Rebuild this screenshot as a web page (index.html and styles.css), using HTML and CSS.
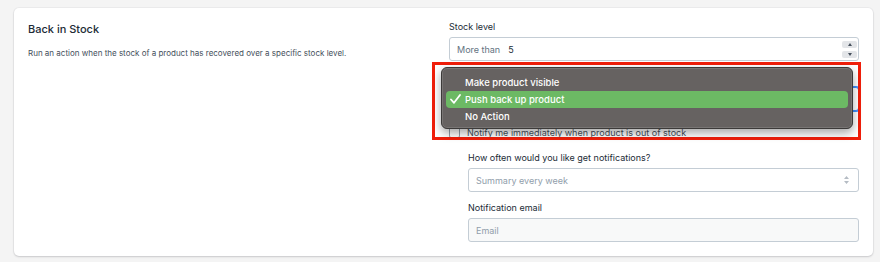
FILE: index.html
```html
<!DOCTYPE html>
<html lang="en">
  <head>
    <meta charset="UTF-8" />
    <title>Back in Stock</title>
    <link rel="stylesheet" href="styles.css">
  </head>
  <body>
    <div class="card">
      <div class="intro">
        <h2 class="title">Back in Stock</h2>
        <p class="desc">Run an action when the stock of a product has recovered over a specific stock level.</p>
      </div>

      <div class="settings">
        <div class="field">
          <label class="label">Stock level</label>
          <div class="input stock">
            <span class="prefix">More than</span>
            <span class="value">5</span>
            <div class="spinner">
              <span class="spin-btn"><svg width="4" height="3" viewBox="0 0 4 3"><path d="M0 3L2 0L4 3Z" fill="#454f5b"/></svg></span>
              <span class="spin-btn"><svg width="4" height="3" viewBox="0 0 4 3"><path d="M0 0L2 3L4 0Z" fill="#454f5b"/></svg></span>
            </div>
          </div>
        </div>

        <!-- the action select sits under the open popup menu -->
        <div class="field">
          <span class="label-space"></span>
          <div class="input select focused"></div>
        </div>

        <label class="check-row"><span class="checkbox"></span>Notify me immediately when product is out of stock</label>

        <div class="sub">
          <div class="field">
            <label class="label">How often would you like get notifications?</label>
            <div class="input select">
              <span class="placeholder">Summary every week</span>
              <svg class="arrows" width="5" height="8" viewBox="0 0 5 8"><path d="M0 3L2.5 0L5 3Z M0 5L2.5 8L5 5Z" fill="#b5bcc4"/></svg>
            </div>
          </div>
          <div class="field">
            <label class="label">Notification email</label>
            <div class="input email"><span class="placeholder">Email</span></div>
          </div>
        </div>

        <div class="mark-box"></div>
        <div class="menu">
          <div class="menu-item">Make product visible</div>
          <div class="menu-item active">
            <svg class="tick" width="11" height="10" viewBox="0 0 11 10"><path d="M1 5.5L4 8.8L10 1" fill="none" stroke="#fff" stroke-width="1.8" stroke-linecap="round" stroke-linejoin="round"/></svg>
            Push back up product
          </div>
          <div class="menu-item">No Action</div>
        </div>
      </div>
    </div>
  </body>
</html>
```

FILE: styles.css
```css
html,
body {
  margin: 0;
  background-color: #f4f4f4;
  font-family: Inter, "Liberation Sans", Arial, sans-serif;
  color: #212b36;
}

.card {
  margin: 8px 7px 6px 14px;
  padding: 13px 14px 14px 14px;
  background-color: #fff;
  border-radius: 5px;
  box-shadow: 0 0 0 1px rgba(63, 63, 68, 0.04), 0 1px 2px rgba(63, 63, 68, 0.2);
  display: grid;
  grid-template-columns: 1fr 410px;
}

.title {
  margin: 0;
  font-size: 11px;
  line-height: 16px;
  font-weight: 500;
}

.desc {
  margin: 10px 0 0 0;
  font-size: 8px;
  line-height: 12px;
  color: #454f5b;
}

.settings {
  position: relative;
}

.field {
  display: flex;
  flex-direction: column;
  gap: 4px;
}

.field + .field {
  margin-top: 10px;
}

.label {
  font-size: 9px;
  line-height: 12px;
}

.label-space {
  height: 12px;
}

.input {
  height: 24px;
  box-sizing: border-box;
  border: 1px solid #c4cdd5;
  border-radius: 3px;
  padding: 0 7px;
  display: flex;
  align-items: center;
  font-size: 9px;
  background-color: #fff;
}

.stock .prefix {
  color: #637381;
}

.stock .value {
  margin-left: 8px;
}

.spinner {
  margin-left: auto;
  margin-right: -6px;
  display: flex;
  flex-direction: column;
  gap: 3px;
}

.spin-btn {
  width: 15px;
  height: 7px;
  background-color: #e3e5e8;
  border-radius: 2px;
  display: flex;
  align-items: center;
  justify-content: center;
}

.focused {
  border-color: #3f8efc;
  box-shadow: 0 0 0 1px #3f8efc;
}

.placeholder {
  color: #919eab;
}

.arrows {
  margin-left: auto;
  margin-right: 2px;
}

.email {
  background-color: #f8f9f9;
}

.check-row {
  margin-top: 14px;
  height: 14px;
  display: flex;
  align-items: center;
  gap: 7px;
  font-size: 9px;
  color: #454f5b;
}

.checkbox {
  width: 11px;
  height: 11px;
  box-sizing: border-box;
  border: 1px solid #919eab;
  border-radius: 2px;
  background-color: #fff;
}

.sub {
  margin: 13px 0 0 19px;
}

/* native popup menu + annotation box on top */
.mark-box {
  position: absolute;
  left: -17px;
  top: 41px;
  width: 429px;
  height: 78px;
  box-sizing: border-box;
  border: 3px solid #f01e0a;
}

.menu {
  position: absolute;
  left: -8px;
  top: 46px;
  width: 412px;
  height: 62px;
  box-sizing: border-box;
  padding: 6px 4px;
  background-color: #666261;
  border: 1px solid #3c3a39;
  border-radius: 6px;
  box-shadow: 0 4px 10px rgba(0, 0, 0, 0.35), inset 0 0 0 1px rgba(255, 255, 255, 0.12);
}

.menu-item {
  position: relative;
  height: 17px;
  line-height: 17px;
  padding-left: 19px;
  border-radius: 4px;
  font-size: 9.5px;
  font-weight: 500;
  color: #fff;
}

.menu-item.active {
  background-color: #6cb964;
}

.tick {
  position: absolute;
  left: 4px;
  top: 3px;
}
```
